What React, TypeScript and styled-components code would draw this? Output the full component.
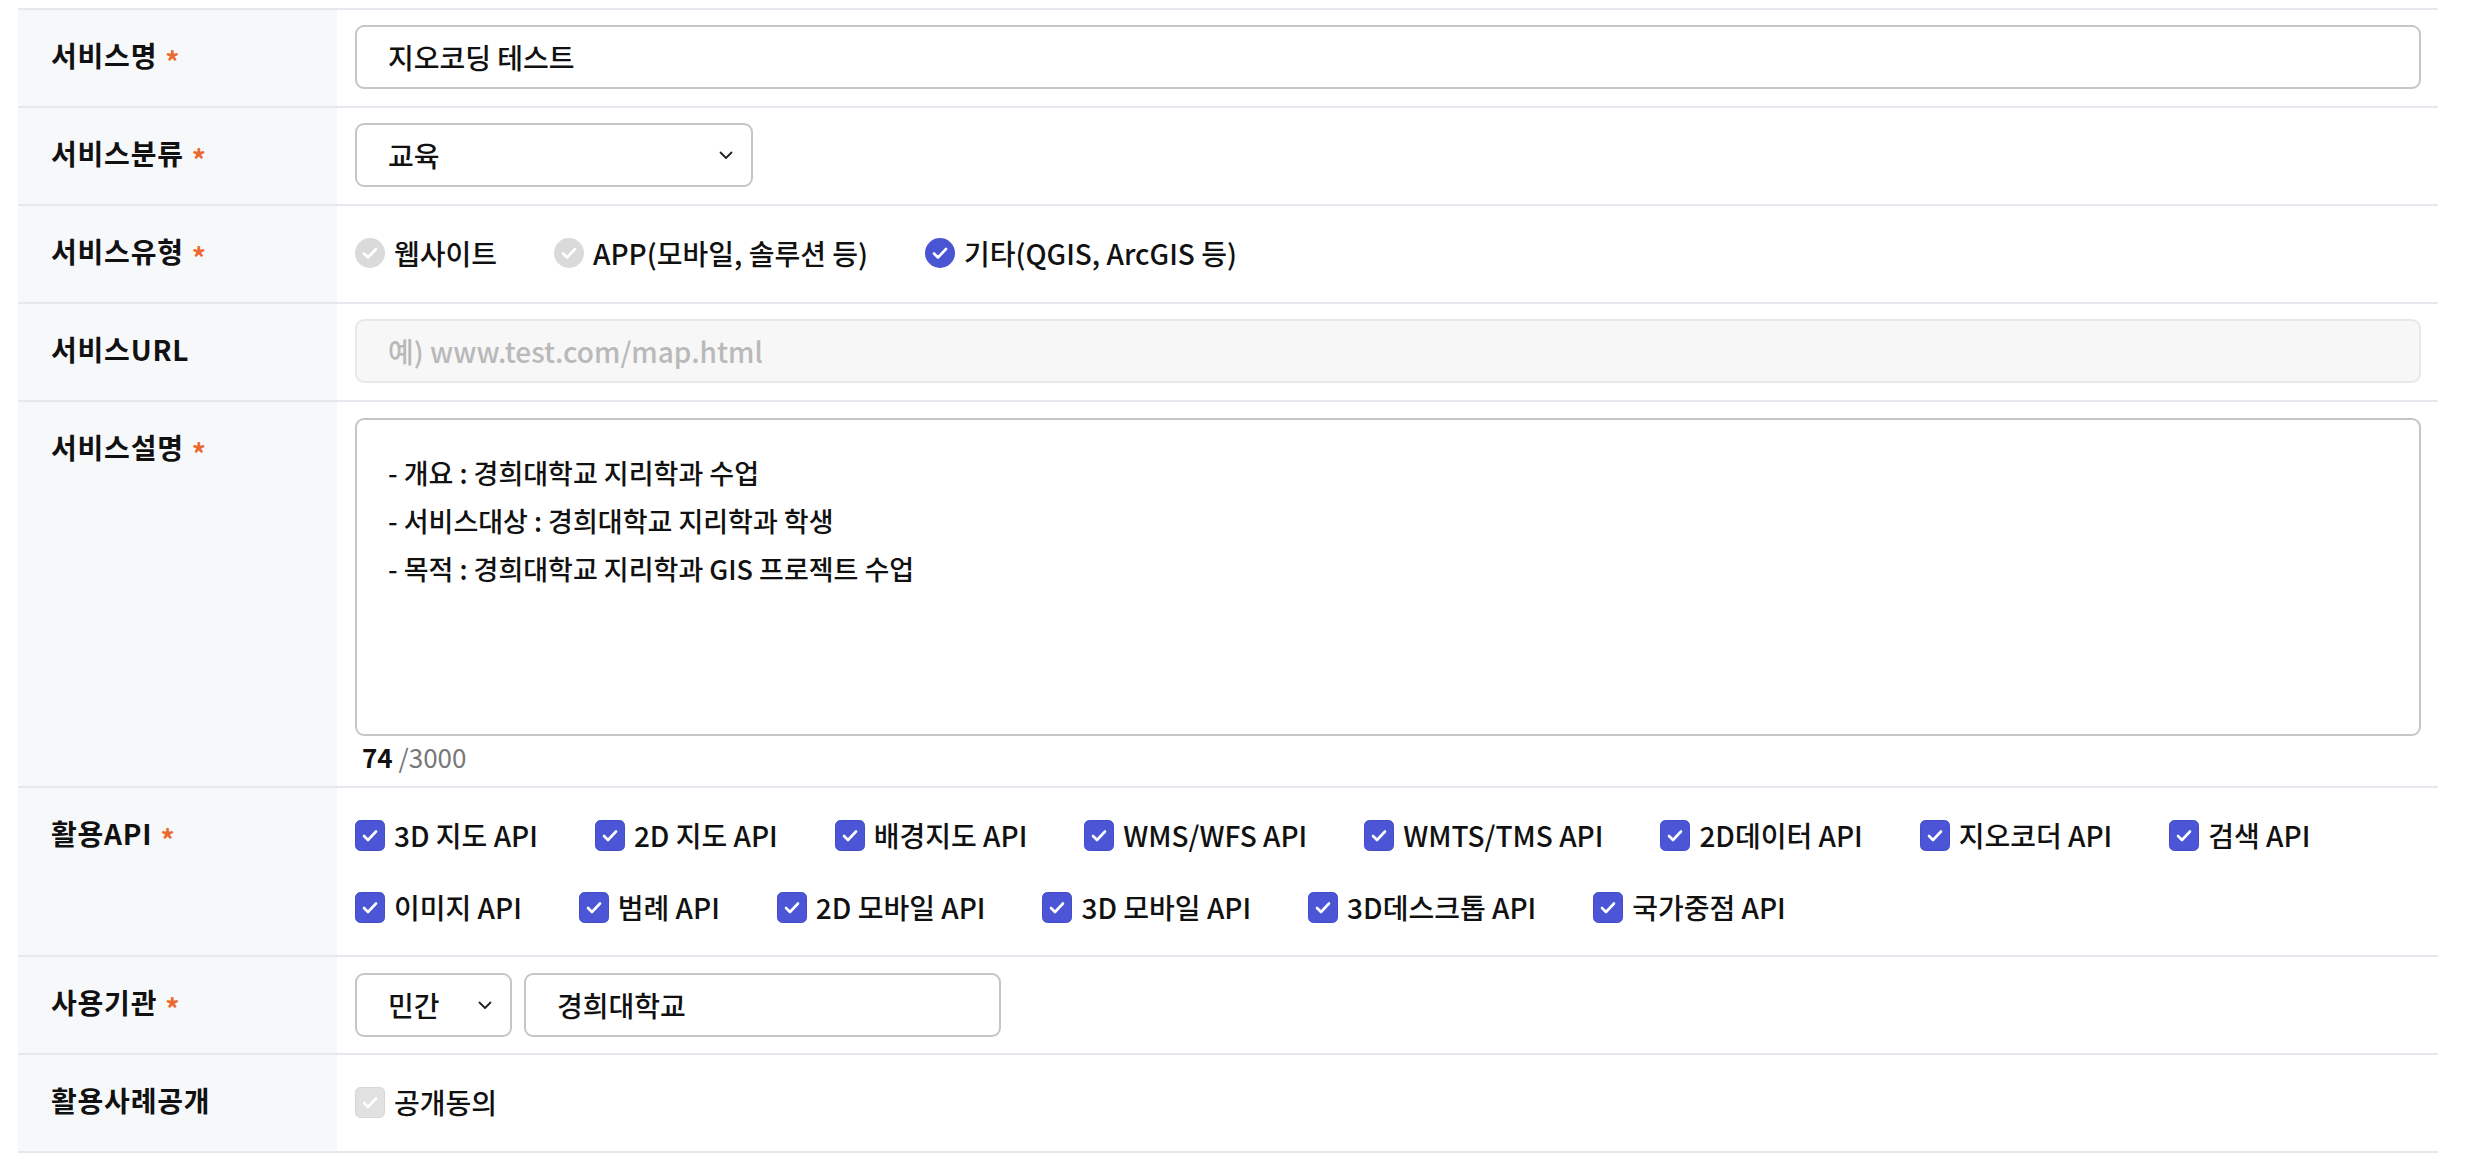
import React from 'react';
import styled, { createGlobalStyle } from 'styled-components';

const Global = createGlobalStyle`
  html, body { margin: 0; padding: 0; background: #ffffff; }
  body {
    font-family: "Noto Sans CJK KR", "Noto Sans", sans-serif;
    color: #111111;
    -webkit-font-smoothing: antialiased;
  }
  * { box-sizing: border-box; }
`;

const Page = styled.div`
  padding: 8px 0 0 18px;
  width: 2478px;
`;

const Table = styled.div`
  width: 2420px;
  border-top: 2px solid #e7e8ed;
`;

const Row = styled.div`
  display: grid;
  grid-template-columns: 319px 1fr;
  border-bottom: 2px solid #e7e8ed;
`;

const LabelCell = styled.div`
  background: #f7f8fa;
  padding: 25px 0 0 33px;
  font-size: 28px;
  font-weight: 700;
  line-height: 40px;
  color: #111;
  display: flex;
  align-items: flex-start;
  letter-spacing: 0.8px;
`;

const Required = styled.span`
  color: #ea6a2f;
  font-size: 28px;
  font-weight: 700;
  margin-left: 8px;
  display: inline-block;
  transform: translateY(6px);
`;

const ValueCell = styled.div<{ $pt?: number; $pb?: number; $col?: boolean }>`
  padding: ${p => p.$pt ?? 15}px 17px ${p => p.$pb ?? 17}px 18px;
  min-height: 96px;
  display: flex;
  flex-direction: ${p => (p.$col ? 'column' : 'row')};
  align-items: ${p => (p.$col ? 'stretch' : 'center')};
  font-size: 28px;
  font-weight: 500;
  color: #111;
`;

const TextBox = styled.div<{ $disabled?: boolean; $width?: string }>`
  width: ${p => p.$width ?? '100%'};
  height: 64px;
  border: 2px solid ${p => (p.$disabled ? '#e8e8e8' : '#c6c6c6')};
  background: ${p => (p.$disabled ? '#f7f7f7' : '#ffffff')};
  border-radius: 9px;
  padding: 0 31px;
  display: flex;
  align-items: center;
  font-size: 28px;
  font-weight: 500;
  color: ${p => (p.$disabled ? '#b9b9b9' : '#111')};
`;

const SelectBox = styled.div<{ $width: number }>`
  width: ${p => p.$width}px;
  height: 64px;
  border: 2px solid #c6c6c6;
  border-radius: 9px;
  padding: 0 18px 0 31px;
  display: flex;
  align-items: center;
  justify-content: space-between;
  font-size: 28px;
  font-weight: 500;
  flex-shrink: 0;
`;

const Chevron = () => (
  <svg width="14" height="9" viewBox="0 0 14 9" fill="none">
    <path d="M1.5 1.5 L7 7 L12.5 1.5" stroke="#222" strokeWidth="1.8" strokeLinecap="round" strokeLinejoin="round" />
  </svg>
);

const InlineGroup = styled.div`
  display: flex;
  align-items: center;
  gap: 12px;
`;

const RadioGroup = styled.div`
  display: flex;
  align-items: center;
  gap: 57px;
`;

const OptionItem = styled.label`
  display: inline-flex;
  align-items: center;
  gap: 9px;
  height: 40px;
  font-size: 28px;
  font-weight: 500;
  color: #111;
  white-space: nowrap;
`;

const RadioIcon = ({ on }: { on: boolean }) => (
  <svg width="30" height="30" viewBox="0 0 30 30">
    <circle cx="15" cy="15" r="15" fill={on ? '#4a55d4' : '#dadada'} />
    <path d="M9 15.5 L13 19.5 L21 11" fill="none" stroke="#fff" strokeWidth="2.6" strokeLinecap="round" strokeLinejoin="round" />
  </svg>
);

const CheckIcon = ({ disabled }: { disabled?: boolean }) => (
  <svg width="30" height="31" viewBox="0 0 30 31">
    <rect x="0.5" y="0.5" width="29" height="30" rx="5" fill={disabled ? '#e1e1e1' : '#4b55d6'} stroke={disabled ? '#d6d6d6' : '#434dc9'} />
    <path d="M9 16 L13 20 L21 11.5" fill="none" stroke="#fff" strokeWidth="2.6" strokeLinecap="round" strokeLinejoin="round" />
  </svg>
);

const CheckGrid = styled.div`
  display: flex;
  flex-wrap: wrap;
  column-gap: 57px;
  row-gap: 32px;
`;

const TextArea = styled.div`
  height: 318px;
  border: 2px solid #c6c6c6;
  border-radius: 9px;
  padding: 29px 31px;
  font-size: 27px;
  font-weight: 500;
  line-height: 48px;
  color: #111;
`;

const Line = styled.div``;

const Counter = styled.div`
  margin-top: 4px;
  padding-left: 7px;
  line-height: 34px;
  font-size: 26px;
  color: #777;
  font-weight: 400;
`;

const CounterNow = styled.span`
  color: #111;
  font-weight: 700;
`;

const Label = ({ text, req }: { text: string; req?: boolean }) => (
  <LabelCell>
    {text}
    {req && <Required>*</Required>}
  </LabelCell>
);

const apis = [
  '3D 지도 API',
  '2D 지도 API',
  '배경지도 API',
  'WMS/WFS API',
  'WMTS/TMS API',
  '2D데이터 API',
  '지오코더 API',
  '검색 API',
  '이미지 API',
  '범례 API',
  '2D 모바일 API',
  '3D 모바일 API',
  '3D데스크톱 API',
  '국가중점 API',
];

const types = [
  { t: '웹사이트', on: false },
  { t: 'APP(모바일, 솔루션 등)', on: false },
  { t: '기타(QGIS, ArcGIS 등)', on: true },
];

export default function App() {
  return (
    <>
      <Global />
      <Page>
        <Table>
          <Row>
            <Label text="서비스명" req />
            <ValueCell>
              <TextBox>지오코딩 테스트</TextBox>
            </ValueCell>
          </Row>
          <Row>
            <Label text="서비스분류" req />
            <ValueCell>
              <SelectBox $width={398}>
                교육
                <Chevron />
              </SelectBox>
            </ValueCell>
          </Row>
          <Row>
            <Label text="서비스유형" req />
            <ValueCell>
              <RadioGroup>
                {types.map(x => (
                  <OptionItem key={x.t}>
                    <RadioIcon on={x.on} />
                    {x.t}
                  </OptionItem>
                ))}
              </RadioGroup>
            </ValueCell>
          </Row>
          <Row>
            <Label text="서비스URL" />
            <ValueCell>
              <TextBox $disabled>예) www.test.com/map.html</TextBox>
            </ValueCell>
          </Row>
          <Row>
            <Label text="서비스설명" req />
            <ValueCell $col $pt={16} $pb={12}>
              <TextArea>
                <Line>- 개요 : 경희대학교 지리학과 수업</Line>
                <Line>- 서비스대상 : 경희대학교 지리학과 학생</Line>
                <Line>- 목적 : 경희대학교 지리학과 GIS 프로젝트 수업</Line>
              </TextArea>
              <Counter>
                <CounterNow>74</CounterNow> /3000
              </Counter>
            </ValueCell>
          </Row>
          <Row>
            <Label text="활용API" req />
            <ValueCell $pt={27} $pb={28}>
              <CheckGrid>
                {apis.map(a => (
                  <OptionItem key={a}>
                    <CheckIcon />
                    {a}
                  </OptionItem>
                ))}
              </CheckGrid>
            </ValueCell>
          </Row>
          <Row>
            <Label text="사용기관" req />
            <ValueCell $pt={16} $pb={16}>
              <InlineGroup>
                <SelectBox $width={157}>
                  민간
                  <Chevron />
                </SelectBox>
                <TextBox $width="477px">경희대학교</TextBox>
              </InlineGroup>
            </ValueCell>
          </Row>
          <Row>
            <Label text="활용사례공개" />
            <ValueCell>
              <OptionItem>
                <CheckIcon disabled />
                공개동의
              </OptionItem>
            </ValueCell>
          </Row>
        </Table>
      </Page>
    </>
  );
}
